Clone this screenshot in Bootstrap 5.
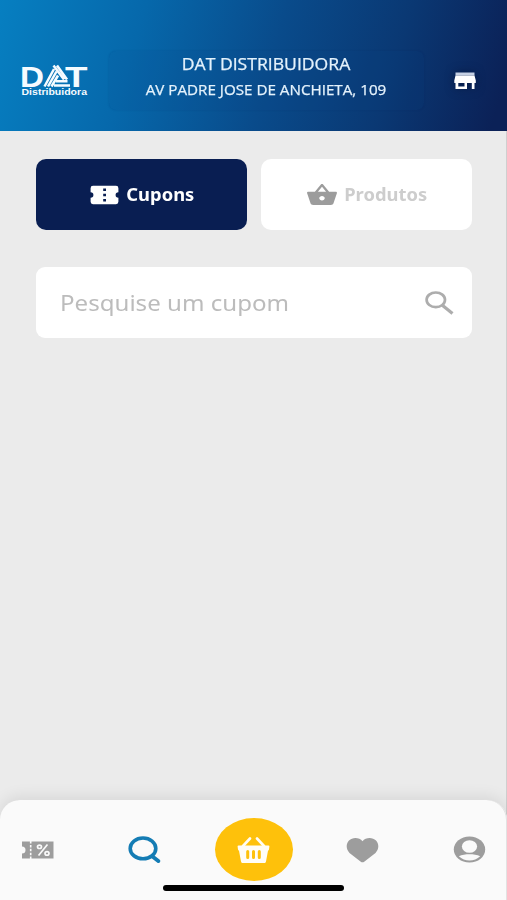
<!DOCTYPE html>
<html lang="pt-BR">
<head>
<meta charset="utf-8">
<meta name="viewport" content="width=device-width, initial-scale=1">
<title>DAT Distribuidora</title>
<link href="https://cdn.jsdelivr.net/npm/bootstrap@5.3.0/dist/css/bootstrap.min.css" rel="stylesheet">
<style>
body{font-family:"Open Sans","Noto Sans",sans-serif;background:#ebebeb}
.app{height:900px;box-shadow:inset -1px 0 #cfcfcf}
.topbar{height:131px;padding:50px 31px 0 21px;background:linear-gradient(106deg,#067fc1 0%,#0668ab 27%,#094b8b 53%,#0a3873 76%,#0b2157 97%)}
.logo{margin-top:14px}
.address{width:315px;height:59px;margin:1px 0 0 21px;border-radius:7px;background:rgba(8,70,140,.1);box-shadow:0 0 2px rgba(0,30,90,.18);color:#e4f2fc;padding:1px 1px 0 0;-webkit-text-stroke:.25px #e4f2fc}
.store-name{font-size:16px;line-height:25px;transform:scaleX(1.1)}
.street{font-size:14px;line-height:25px;transform:scaleX(1.085)}
.store{margin:20px 0 0 30px;filter:drop-shadow(0 0 5px rgba(0,10,40,.5))}
.content-area{padding:28px 35px 0 36px}
.tabs-row{gap:14px}
.tab-btn{height:71px;border-radius:10px;font-family:"Noto Sans",sans-serif;font-size:18px;font-weight:700;border:0;background:#fff;color:#cdcdcd;flex:1 1 0;padding:0}
.tab-btn.selected{background:#091e52;color:#fff}
.tab-label{transform:scaleX(1.02)}
.search{height:71px;margin-top:37px;border-radius:9px;background:#fff;padding:0 18px 0 24px}
.search input{font-family:"Noto Sans",sans-serif;font-size:22px;color:#888;line-height:30px;outline:0;min-width:0;transform:scaleX(1.095);transform-origin:left;margin-top:-2px;width:240px}
.search input::placeholder{color:#bcbcbc;opacity:1}
.bottom{height:100px;border-radius:20px 20px 0 0;background:#fafafa;box-shadow:0 -3px 16px rgba(0,0,0,.09),inset -1px 0 #e2e2e2;padding:18px 21px 0 21px}
.bottom a{height:63px}
.find-link{padding-left:20px}
.heart-link{padding-right:20px}
.basket{width:78px;background:#fec10b;border-radius:50%}
.home-line{width:181px;height:6px;border-radius:3px;background:#000;margin:4px auto 0}
svg{display:block;flex:none}
</style>
<script src="https://cdn.jsdelivr.net/npm/bootstrap@5.3.0/dist/js/bootstrap.bundle.min.js"></script>
</head>
<body>
<div class="app d-flex flex-column overflow-hidden">
  <header class="topbar d-flex align-items-start">
    <svg class="logo overflow-visible" width="67" height="34" viewBox="0 0 67 34" fill="#f5fbff" font-family="Liberation Sans,sans-serif" font-weight="700">
      <text x="-1" y="22.600" font-size="29.500" textLength="24" lengthAdjust="spacingAndGlyphs">D</text>
      <text x="44" y="22.600" font-size="29.500" textLength="22.500" lengthAdjust="spacingAndGlyphs">T</text>
      <g stroke="#f5fbff" stroke-width="2.500" fill="none"><path d="M23.500 22.500 33 5M27 22.500 35.500 7.500M30.500 22.500 37 11.500M32.500 1.500 43 15.500M36 1.500 46 15.500M35 17.300H46.500M33 21.400H49"/></g>
      <text x="0.500" y="31" font-size="9" textLength="65.500" lengthAdjust="spacingAndGlyphs">Distribuidora</text>
    </svg>
    <div class="address text-center text-nowrap">
      <div class="store-name">DAT DISTRIBUIDORA</div>
      <div class="street">AV PADRE JOSE DE ANCHIETA, 109</div>
    </div>
    <svg class="store" width="22" height="20" viewBox="0 0 22 20"><path fill="#c5d0e4" d="M1.500 2.500h19v3h-19z"/><path fill="#fff" d="M1.500 5.500h19l1.300 5v2.500H20.500v6h-2.700v-6H13v6H1.500v-6H.3v-2.500zM4.300 13v3.500h6.200V13z" fill-rule="evenodd"/></svg>
  </header>

  <main class="content-area flex-grow-1">
    <div class="tabs-row d-flex">
      <button class="btn tab-btn selected d-flex align-items-center justify-content-center">
        <svg class="me-2" width="29" height="20" viewBox="0 0 29 20"><path fill="#fff" d="M3 .8h23a2.400 2.400 0 0 1 2.400 2.400v4a2.700 2.700 0 0 0 0 5.600v4a2.400 2.400 0 0 1-2.400 2.400H3A2.400 2.400 0 0 1 .6 16.800v-4a2.700 2.700 0 0 0 0-5.600v-4A2.400 2.400 0 0 1 3 .8z"/><path fill="#091e52" d="M13.200 3.500h2.800v2.500h-2.800zM13.200 8.700h2.800v2.500h-2.800zM13.200 14h2.800v2.500h-2.800z"/></svg>
        <span class="tab-label">Cupons</span>
      </button>
      <button class="btn tab-btn d-flex align-items-center justify-content-center">
        <svg class="me-2" width="30" height="22" viewBox="1 2 22 20" preserveAspectRatio="none"><path fill="#9c9c9c" d="M17.210 9l-4.380-6.560c-.190-.280-.510-.420-.830-.420s-.640.140-.830.430L6.790 9H2c-.550 0-1 .450-1 1 0 .090.010.180.040.270l2.540 9.270c.230.840 1 1.460 1.920 1.460h13c.920 0 1.690-.620 1.930-1.460l2.540-9.270L23 10c0-.550-.450-1-1-1zM9 9l3-4.400L15 9zm3 8c-1.100 0-2-.900-2-2s.900-2 2-2 2 .900 2 2-.900 2-2 2z"/></svg>
        <span class="tab-label">Produtos</span>
      </button>
    </div>
    <div class="search d-flex align-items-center justify-content-between">
      <input class="border-0 bg-transparent p-0" type="text" placeholder="Pesquise um cupom" aria-label="Pesquise um cupom">
      <svg width="29" height="24" viewBox="0 0 29 24" fill="none" stroke="#adadad"><ellipse cx="10.800" cy="8.800" rx="9.200" ry="7.300" stroke-width="2.700"/><path d="M17 14 27.500 22.500" stroke-width="3.200"/></svg>
    </div>
  </main>

  <nav class="bottom">
    <div class="d-flex justify-content-between align-items-center">
      <a href="#" aria-label="Cupons" class="d-flex align-items-center">
        <svg width="33" height="18" viewBox="0 0 33 18"><path fill="#9d9d9d" d="M1 .5h31.500v17H1v-5a3.500 3.500 0 0 0 0-7z"/><path d="M9.700 0v18" stroke="#fafafa" stroke-width="1.600" stroke-dasharray="2.500 1.400"/><g stroke="#fafafa" fill="none" stroke-width="1.700"><path d="M17.500 14.500 26.500 3.500"/><ellipse cx="18.500" cy="5.800" rx="2" ry="1.700"/><ellipse cx="26" cy="12.400" rx="2" ry="1.700"/></g></svg>
      </a>
      <a href="#" aria-label="Buscar" class="find-link d-flex align-items-center">
        <svg width="33" height="28" viewBox="0 0 33 28" fill="none" stroke="#147cb4" stroke-linecap="round"><ellipse cx="15" cy="12.400" rx="12.800" ry="10.400" stroke-width="3.600"/><path d="M24.500 20.500 30.300 25" stroke-width="3.900"/></svg>
      </a>
      <a href="#" aria-label="Cesta" class="basket d-flex align-items-center justify-content-center">
        <svg width="33" height="28" viewBox="0 0 33 28"><path fill="#fffdf6" d="M1.500 9.500h30q1 0 .9 1l-.4 3q-.2 1-1 1.200l-2 10.800Q28.600 27 27.500 27h-22q-1.100 0-1.500-1.500L2 14.700q-.8-.2-1-1.200l-.4-3q-.1-1 .9-1z"/><path d="M6 10 13 2.500M27 10 20 2.500" stroke="#fffdf6" stroke-width="2.600" stroke-linecap="round"/><path d="M10.700 15.500v6M16.500 15.500v6M22.300 15.500v6" stroke="#fec10b" stroke-width="3" stroke-linecap="round"/></svg>
      </a>
      <a href="#" aria-label="Favoritos" class="heart-link d-flex align-items-center">
        <svg width="33" height="26" viewBox="0 0 33 26"><path fill="#9d9d9d" d="M16.500 4.200C13.500 .2 6.500-.2 3 3.500-.2 7-.1 12 3.500 16L14.800 24.700q1.700 1.200 3.400 0L29.500 16C33.100 12 33.200 7 30 3.500 26.500-.2 19.500 .2 16.500 4.200z"/></svg>
      </a>
      <a href="#" aria-label="Perfil" class="d-flex align-items-center">
        <svg width="33" height="27" viewBox="0 0 33 27"><ellipse cx="16.500" cy="13.500" rx="15.700" ry="13" fill="#9d9d9d"/><ellipse cx="16.500" cy="10.500" rx="7.600" ry="6.300" fill="#fafafa"/><path fill="#fafafa" d="M5.800 20.300C12 17.700 21 17.700 27.200 20.300 21.500 26 11.500 26 5.800 20.300z"/></svg>
      </a>
    </div>
    <div class="home-line"></div>
  </nav>
</div>
</body>
</html>
